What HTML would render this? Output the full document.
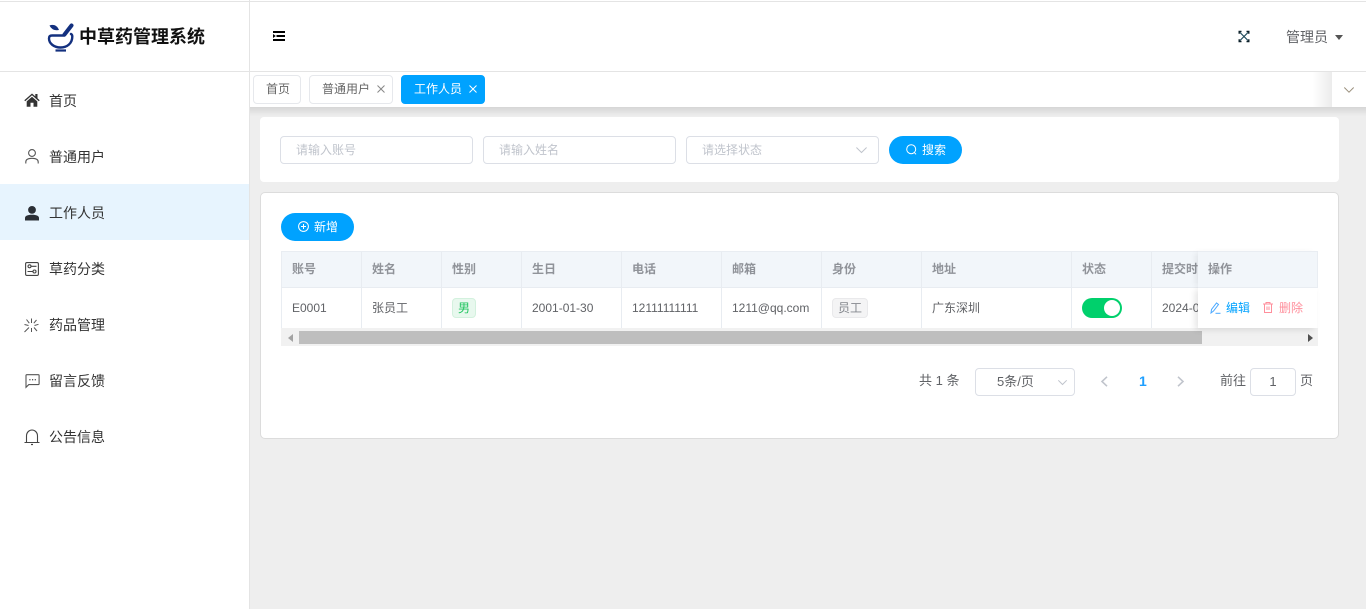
<!DOCTYPE html>
<html lang="zh-CN"><head><meta charset="utf-8"><title>中草药管理系统</title>
<style>
*{box-sizing:border-box;margin:0;padding:0}
html,body{width:1366px;height:609px;overflow:hidden;background:#eee;font-family:"Liberation Sans","Noto Sans CJK SC",sans-serif;font-size:13px;color:#606266}
.a{position:absolute}
.t{position:absolute;white-space:nowrap;line-height:18px}
svg{position:absolute;display:block;overflow:visible}
.m{position:absolute;left:49px;font-size:14px;color:#333;line-height:20px;white-space:nowrap}
.inp{position:absolute;top:136px;width:193px;height:28px;border:1px solid #dcdfe6;border-radius:4px;background:#fff;color:#c0c4cc;font-size:12px;line-height:26px;padding-left:15px}
.btn{position:absolute;height:28px;border-radius:14px;background:#00a2ff;color:#fff;font-size:12px;line-height:28px}
.tab{position:absolute;top:75px;height:29px;border:1px solid #e6e8ec;border-radius:4px;background:#fff;font-size:12px;line-height:27px;color:#666}
.th{position:absolute;top:260px;font-size:12px;font-weight:bold;color:#909399;line-height:18px;white-space:nowrap}
.td{position:absolute;top:299px;font-size:12px;color:#606266;line-height:18px;white-space:nowrap}
.vl{position:absolute;top:252px;height:76px;width:1px;background:#e8ecf1}
</style></head><body>
<div class="a" style="left:0;top:0;width:1366px;height:72px;background:#fff"></div>
<div class="a" style="left:0;top:1px;width:1366px;height:1px;background:#e4e4e4"></div>
<div class="a" style="left:0;top:72px;width:249px;height:537px;background:#fff"></div>
<div class="a" style="left:249px;top:0;width:1px;height:609px;background:#e4e4e4"></div>
<div class="a" style="left:0;top:71px;width:1366px;height:1px;background:#e4e4e4"></div>

<!-- logo -->
<svg style="left:47px;top:21px" width="28" height="31" viewBox="0 0 28 31" fill="none">
<path d="M17.500 14.500H5C3 14.500 2 15.500 2 17.500C2 22.500 7 26.500 13.500 26.500C20 26.500 25.300 22.500 25.300 15.500C25.300 14.500 25 13.500 24 13" stroke="#13307f" stroke-width="2.400" stroke-linecap="round"/>
<path d="M17.500 13.500L24.500 4.500" stroke="#13307f" stroke-width="4" stroke-linecap="round"/>
<path d="M2.500 4.500C6 3 10 4 12 9C8 9.800 4.500 8.500 2.500 4.500Z" fill="#13307f"/>
<path d="M8.500 29.500H19" stroke="#13307f" stroke-width="2.200"/>
</svg>
<div class="t" style="left:79px;top:25px;font-size:18px;font-weight:bold;color:#111;line-height:24px">中草药管理系统</div>

<!-- header icons -->
<svg style="left:273px;top:31px" width="12" height="11" viewBox="0 0 12 11"><path d="M0 0H12V2H0ZM3.500 4H12V6H3.500ZM0 8H12V10H0ZM0 3L2.800 5L0 7Z" fill="#000"/></svg>
<svg style="left:1238px;top:30px" width="12" height="13" viewBox="0 0 12 13" fill="none"><path d="M2 2.500L10 10.500M10 2.500L2 10.500" stroke="#1f4a5a" stroke-width="1.200"/><path d="M0.500 0.800H3.500V2.200H1.900V3.800H0.500ZM11.500 0.800H8.500V2.200H10.100V3.800H11.500ZM0.500 12.200H3.500V10.800H1.900V9.200H0.500ZM11.500 12.200H8.500V10.800H10.100V9.200H11.500Z" fill="#0b1f28"/></svg>
<div class="t" style="left:1286px;top:28px;font-size:14px;color:#606266">管理员</div>
<svg style="left:1335px;top:35px" width="8" height="5" viewBox="0 0 8 5"><path d="M0 0H8L4 5Z" fill="#555"/></svg>

<!-- sidebar -->
<div class="a" style="left:0;top:184px;width:249px;height:56px;background:#e7f4fe"></div>
<svg style="left:24px;top:93px" width="16" height="14" viewBox="0 0 16 14"><path d="M8 0.500L0.300 7.300L1.200 8.300L8 2.300L14.800 8.300L15.700 7.300L13.500 5.300V1H11.300V3.400ZM2.700 8.400V13.800H6.500V9.800H9.500V13.800H13.300V8.400L8 3.800Z" fill="#333"/></svg>
<div class="m" style="top:91px">首页</div>
<svg style="left:25px;top:149px" width="14" height="15" viewBox="0 0 14 15" fill="none" stroke="#555" stroke-width="1.100"><circle cx="7" cy="4" r="3.400"/><path d="M0.800 14.500V13C0.800 10.500 3 9.300 7 9.300C11 9.300 13.200 10.500 13.200 13V14.500"/></svg>
<div class="m" style="top:147px">普通用户</div>
<svg style="left:25px;top:206px" width="14" height="15" viewBox="0 0 14 15"><circle cx="7" cy="3.900" r="3.900" fill="#2b2f36"/><path d="M0 14.500V12C0 9.800 2.500 8.700 7 8.700C11.500 8.700 14 9.800 14 12V14.500Z" fill="#2b2f36"/></svg>
<div class="m" style="top:203px">工作人员</div>
<svg style="left:25px;top:262px" width="14" height="14" viewBox="0 0 14 14" fill="none" stroke="#444" stroke-width="1.100"><rect x="0.600" y="0.600" width="12.800" height="12.800" rx="1.300"/><circle cx="4.500" cy="4.300" r="1.500"/><path d="M6.500 4.300H11.500M2.500 9.500H8"/><circle cx="9.500" cy="9.500" r="1.500"/></svg>
<div class="m" style="top:259px">草药分类</div>
<svg style="left:24px;top:318px" width="15" height="15" viewBox="0 0 15 15" fill="none" stroke="#555" stroke-width="1"><path d="M7.500 0.500V5M2.500 1.500L5.300 5.200M12.500 2L9.800 5.200M0.500 6.500L4.500 7.500M14.500 6.300L10.500 7.500M5 9.500L0.500 14M10 9.500L13 13M7.500 10V14"/></svg>
<div class="m" style="top:315px">药品管理</div>
<svg style="left:25px;top:374px" width="15" height="14" viewBox="0 0 15 14" fill="none" stroke="#555" stroke-width="1.100"><path d="M1 13.300V1.500C1 1 1.300 0.700 1.800 0.700H13.300C13.800 0.700 14.100 1 14.100 1.500V9.800C14.100 10.300 13.800 10.600 13.300 10.600H3.800Z"/><path d="M4.300 5.700H5.500M7 5.700H8.200M9.700 5.700H10.900" stroke-width="1.300"/></svg>
<div class="m" style="top:371px">留言反馈</div>
<svg style="left:24px;top:429px" width="16" height="16" viewBox="0 0 16 16" fill="none" stroke="#444" stroke-width="1.100"><path d="M0.500 13.500H15.500M2.500 13.500V7C2.500 3.500 5 1 8 1C11 1 13.500 3.500 13.500 7V13.500"/><path d="M7 15.500H9" stroke-width="1.200"/></svg>
<div class="m" style="top:427px">公告信息</div>

<!-- tabs bar -->
<div class="a" style="left:250px;top:72px;width:1116px;height:35px;background:#fff"></div>
<div class="a" style="left:250px;top:107px;width:1116px;height:9px;background:linear-gradient(180deg,rgba(0,0,0,.1),rgba(0,0,0,0))"></div>
<div class="tab" style="left:253px;width:48px;padding-left:12px">首页</div>
<div class="tab" style="left:309px;width:84px;padding-left:12px">普通用户</div>
<svg style="left:377px;top:85px" width="8" height="8" viewBox="0 0 8 8"><path d="M0.500 0.500L7.500 7.500M7.500 0.500L0.500 7.500" stroke="#888" stroke-width="1"/></svg>
<div class="tab" style="left:401px;width:84px;padding-left:12px;background:#00a2ff;border-color:#00a2ff;color:#fff">工作人员</div>
<svg style="left:469px;top:85px" width="8" height="8" viewBox="0 0 8 8"><path d="M0.500 0.500L7.500 7.500M7.500 0.500L0.500 7.500" stroke="#fff" stroke-width="1"/></svg>
<div class="a" style="left:1312px;top:72px;width:20px;height:35px;background:linear-gradient(90deg,rgba(0,0,0,0),rgba(0,0,0,.08))"></div>
<div class="a" style="left:1332px;top:72px;width:34px;height:35px;background:#fff"></div>
<svg style="left:1344px;top:87px" width="10" height="6" viewBox="0 0 10 6" fill="none"><path d="M0.300 0.500L5 5.200L9.700 0.500" stroke="#9a8f7c" stroke-width="1"/></svg>

<!-- search card -->
<div class="a" style="left:260px;top:117px;width:1079px;height:65px;background:#fff;border-radius:4px"></div>
<div class="inp" style="left:280px">请输入账号</div>
<div class="inp" style="left:483px">请输入姓名</div>
<div class="inp" style="left:686px">请选择状态</div>
<svg style="left:856px;top:147px" width="11" height="6" viewBox="0 0 11 6" fill="none"><path d="M0.400 0.500L5.500 5.500L10.600 0.500" stroke="#c0c4cc" stroke-width="1"/></svg>
<div class="btn" style="left:889px;top:136px;width:73px;padding-left:33px">搜索</div>
<svg style="left:906px;top:144px" width="11" height="12" viewBox="0 0 11 12" fill="none" stroke="#fff" stroke-width="1"><circle cx="5.200" cy="5.200" r="4.500"/><path d="M8.500 8.700L10 10.300"/></svg>

<!-- table card -->
<div class="a" style="left:260px;top:192px;width:1079px;height:247px;background:#fff;border:1px solid #dcdcdc;border-radius:5px"></div>
<div class="btn" style="left:281px;top:213px;width:73px;padding-left:33px">新增</div>
<svg style="left:298px;top:221px" width="11" height="11" viewBox="0 0 11 11" fill="none" stroke="#fff" stroke-width="1"><circle cx="5.500" cy="5.500" r="4.900"/><path d="M3 5.500H8M5.500 3V8"/></svg>

<div class="a" style="left:281px;top:251px;width:1037px;height:37px;background:#f2f6fa;border:1px solid #e9edf2"></div>
<div class="a" style="left:281px;top:288px;width:1037px;height:40px;background:#fff;border-left:1px solid #e9edf2"></div>
<div class="a" style="left:281px;top:287px;width:1037px;height:1px;background:#e8ecf1"></div>
<div class="vl" style="left:361px"></div><div class="vl" style="left:441px"></div><div class="vl" style="left:521px"></div><div class="vl" style="left:621px"></div><div class="vl" style="left:721px"></div><div class="vl" style="left:821px"></div><div class="vl" style="left:921px"></div><div class="vl" style="left:1071px"></div><div class="vl" style="left:1151px"></div>

<div class="th" style="left:292px">账号</div><div class="th" style="left:372px">姓名</div><div class="th" style="left:452px">性别</div><div class="th" style="left:532px">生日</div><div class="th" style="left:632px">电话</div><div class="th" style="left:732px">邮箱</div><div class="th" style="left:832px">身份</div><div class="th" style="left:932px">地址</div><div class="th" style="left:1082px">状态</div><div class="th" style="left:1162px">提交时间</div>

<div class="td" style="left:292px">E0001</div>
<div class="td" style="left:372px">张员工</div>
<div class="a" style="left:452px;top:298px;width:24px;height:20px;background:#e8f8ee;border:1px solid #d3f1de;border-radius:4px;color:#1fc45e;font-size:12px;line-height:18px;text-align:center">男</div>
<div class="td" style="left:532px">2001-01-30</div>
<div class="td" style="left:632px">12111111111</div>
<div class="td" style="left:732px">1211@qq.com</div>
<div class="a" style="left:832px;top:298px;width:36px;height:20px;background:#f4f4f5;border:1px solid #e9e9eb;border-radius:4px;color:#85888e;font-size:12px;line-height:18px;text-align:center">员工</div>
<div class="td" style="left:932px">广东深圳</div>
<div class="a" style="left:1082px;top:298px;width:40px;height:20px;background:#00d06c;border-radius:10px"></div>
<div class="a" style="left:1104px;top:300px;width:16px;height:16px;background:#fff;border-radius:50%"></div>
<div class="td" style="left:1162px">2024-01-01 12:00:00</div>

<!-- scrollbar -->
<div class="a" style="left:281px;top:328px;width:1037px;height:18px;background:#f1f1f1"></div>
<div class="a" style="left:299px;top:331px;width:903px;height:13px;background:#bebebe"></div>
<svg style="left:288px;top:334px" width="5" height="8" viewBox="0 0 5 8"><path d="M5 0V8L0 4Z" fill="#a3a3a3"/></svg>
<svg style="left:1308px;top:334px" width="5" height="8" viewBox="0 0 5 8"><path d="M0 0V8L5 4Z" fill="#505050"/></svg>

<!-- fixed column -->
<div class="a" style="left:1198px;top:251px;width:120px;height:37px;background:#f2f6fa;border:1px solid #e9edf2;border-left:0;box-shadow:-4px 0 6px -2px rgba(0,0,0,.08)"></div>
<div class="a" style="left:1198px;top:288px;width:119px;height:40px;background:#fff;box-shadow:-3px 2px 6px rgba(0,0,0,.1)"></div>
<div class="a" style="left:1198px;top:251px;width:120px;height:37px;background:#f2f6fa;border:1px solid #e9edf2;border-left:0"></div>
<div class="th" style="left:1208px">操作</div>
<svg style="left:1210px;top:302px" width="11" height="12" viewBox="0 0 11 12" fill="none" stroke="#4aa8ff" stroke-width="1"><path d="M1 11L1.500 7.500L6.500 1L8.500 2.500L3.500 9Z"/><path d="M5.500 11.300H10.500"/></svg>
<div class="td" style="left:1226px;color:#00a2ff">编辑</div>
<svg style="left:1263px;top:302px" width="10" height="11" viewBox="0 0 10 11" fill="none" stroke="#ff8f9c" stroke-width="1"><path d="M0 2H10M3 2V0.500H7V2M1.500 2V10.500H8.500V2M4 4.500V8M6 4.500V8"/></svg>
<div class="td" style="left:1279px;color:#ff8f9c">删除</div>

<!-- pagination -->
<div class="t" style="left:919px;top:372px;color:#606266">共 1 条</div>
<div class="a" style="left:975px;top:368px;width:100px;height:28px;border:1px solid #dcdfe6;border-radius:4px;background:#fff;line-height:26px;padding-left:21px;color:#606266">5条/页</div>
<svg style="left:1058px;top:380px" width="9" height="5" viewBox="0 0 9 5" fill="none"><path d="M0.300 0.300L4.500 4.500L8.700 0.300" stroke="#c0c4cc" stroke-width="1"/></svg>
<svg style="left:1100px;top:376px" width="8" height="11" viewBox="0 0 8 11" fill="none"><path d="M7 0.800L2 5.500L7 10.200" stroke="#c0c4cc" stroke-width="1.600"/></svg>
<div class="t" style="left:1139px;top:372px;font-weight:bold;font-size:14px;color:#1e9fff">1</div>
<svg style="left:1177px;top:376px" width="8" height="11" viewBox="0 0 8 11" fill="none"><path d="M1 0.800L6 5.500L1 10.200" stroke="#c0c4cc" stroke-width="1.600"/></svg>
<div class="t" style="left:1220px;top:372px">前往</div>
<div class="a" style="left:1250px;top:368px;width:46px;height:28px;border:1px solid #dcdfe6;border-radius:4px;background:#fff;text-align:center;line-height:26px">1</div>
<div class="t" style="left:1300px;top:372px">页</div>
</body></html>
